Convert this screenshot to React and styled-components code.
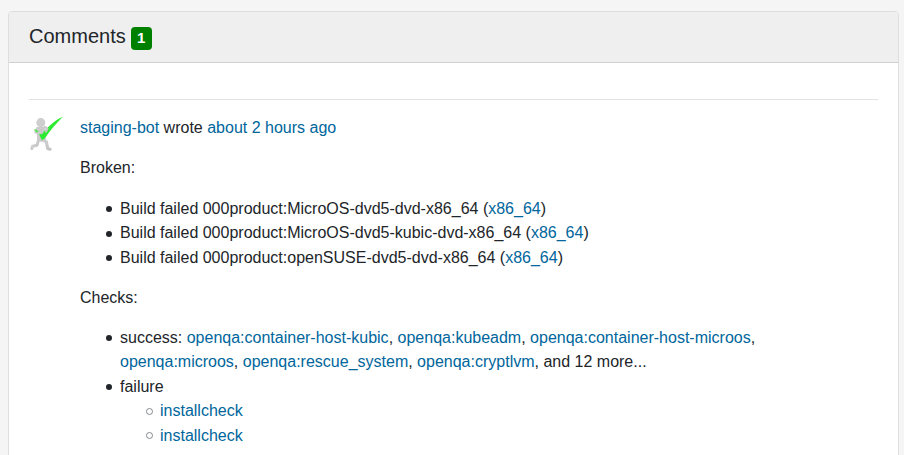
import React from "react";
import styled, { createGlobalStyle } from "styled-components";

const GlobalStyle = createGlobalStyle`
  *, *::before, *::after { box-sizing: border-box; }
  body {
    margin: 0;
    height: 455px;
    overflow: hidden;
    background: #f5f5f5;
    color: #212529;
    font: 16px/24.4px "Liberation Sans", Arial, sans-serif;
  }
`;

const Page = styled.main`
  height: 455px;
  padding: 11px 5px 0 8px;
  overflow: hidden;
`;

const Card = styled.section`
  height: 520px;
  background: #fff;
  border: 1px solid #dedede;
  border-radius: 4px;
  overflow: hidden;
`;

const CardHeader = styled.header`
  display: flex;
  align-items: center;
  gap: 5px;
  height: 51px;
  padding: 0 20px;
  background: #efefef;
  border-bottom: 1px solid #d0d0d0;
`;

const Title = styled.h5`
  margin: 0;
  font-size: 20px;
  font-weight: 400;
  line-height: 24px;
  padding-bottom: 2px;
`;

const Badge = styled.span`
  width: 21px;
  height: 23px;
  margin-top: 3px;
  border-radius: 4px;
  background: #008000;
  color: #fff;
  font-size: 15px;
  font-weight: 700;
  line-height: 21px;
  text-align: center;
`;

const CardBody = styled.div`
  padding: 36px 20px 0;
`;

const Divider = styled.hr`
  margin: 0 0 16px;
  border: 0;
  border-top: 1px solid #e2e2e2;
`;

const Comment = styled.article`
  display: flex;
  gap: 16px;
`;

const Avatar = styled.svg`
  flex: none;
  width: 35px;
  height: 35px;
`;

const Content = styled.div`
  flex: 1;
  min-width: 0;
`;

const Paragraph = styled.p`
  margin: 0 0 16px;
`;

const List = styled.ul`
  margin: 0 0 ${(p) => (p.$nested ? "0" : "15.4px")};
  padding-left: 40px;
  line-height: 24.45px;
  list-style: none;
`;

const Item = styled.li`
  &::before {
    content: "";
    display: inline-block;
    width: ${(p) => (p.$hollow ? "7px" : "6px")};
    height: ${(p) => (p.$hollow ? "7px" : "6px")};
    margin-left: -14px;
    margin-right: ${(p) => (p.$hollow ? "7px" : "8px")};
    border-radius: 50%;
    background: ${(p) => (p.$hollow ? "transparent" : "#212529")};
    border: ${(p) => (p.$hollow ? "1px solid #85888b" : "0")};
    vertical-align: ${(p) => (p.$hollow ? "1.6px" : "1.6px")};
  }
`;

const Checks = styled.div`
  width: 690px;
`;

const Link = styled.a`
  color: #00669c;
  text-decoration: none;
`;

const builds = ["MicroOS-dvd5-dvd-x86_64", "MicroOS-dvd5-kubic-dvd-x86_64", "openSUSE-dvd5-dvd-x86_64"];
const passed = [
  "container-host-kubic",
  "kubeadm",
  "container-host-microos",
  "microos",
  "rescue_system",
  "cryptlvm",
];

function BotAvatar() {
  return (
    <Avatar viewBox="0 0 35 35" aria-label="staging-bot">
      <defs>
        <linearGradient id="body" x1="0" y1="0" x2="1" y2="1">
          <stop offset="0" stopColor="#d6d6d6" />
          <stop offset="1" stopColor="#c2c2c2" />
        </linearGradient>
      </defs>
      <g fill="none" stroke="url(#body)" strokeLinecap="round" strokeLinejoin="round">
        <path d="M9.5 24 L8 29.2 L3.5 30.2 L2.8 32.6" strokeWidth="3" />
        <path d="M13 23.5 L17.4 26 L18.6 32.4 L21 33.2" strokeWidth="3.2" />
      </g>
      <path d="M8.5 10.8 Q12 9.6 15.6 11 L16.5 18 L16.8 24.4 Q12.5 27 8.2 25 L7.8 18 Z" fill="#cbcbcb" />
      <circle cx="11.8" cy="6.6" r="4.5" fill="#cecece" />
      <path d="M8.3 12.4 L6.5 16 L10.5 17.8" fill="none" stroke="#cccccc" strokeWidth="2.6" strokeLinecap="round" strokeLinejoin="round" />
      <path d="M4.6 13.4 L7.4 13.6 L9.6 15.8 L7.8 16.4 Z" fill="#4de650" />
      <path d="M10 18.2 L13.2 17.9 C18 11.8 25 4.7 34 .6 C28 6.8 21 14.5 15.8 22.4 L12.9 24.2 Z" fill="#2fea33" />
      <path d="M15.8 11 L18.4 12.6 L17 15.4" fill="none" stroke="#c8c8c8" strokeWidth="2.2" strokeLinecap="round" strokeLinejoin="round" />
    </Avatar>
  );
}

export default function App() {
  return (
    <>
      <GlobalStyle />
      <Page>
        <Card>
          <CardHeader>
            <Title>Comments</Title>
            <Badge>1</Badge>
          </CardHeader>
          <CardBody>
            <Divider />
            <Comment>
              <BotAvatar />
              <Content>
                <Paragraph>
                  <Link>staging-bot</Link> wrote <Link>about 2 hours ago</Link>
                </Paragraph>
                <Paragraph>Broken:</Paragraph>
                <List>
                  {builds.map((name) => (
                    <Item key={name}>
                      Build failed 000product:{name} (<Link>x86_64</Link>)
                    </Item>
                  ))}
                </List>
                <Paragraph>Checks:</Paragraph>
                <Checks>
                  <List>
                    <Item>
                      success:{" "}
                      {passed.map((name) => (
                        <React.Fragment key={name}>
                          <Link>openqa:{name}</Link>,{" "}
                        </React.Fragment>
                      ))}
                      and 12 more...
                    </Item>
                    <Item>
                      failure
                      <List $nested>
                        <Item $hollow><Link>installcheck</Link></Item>
                        <Item $hollow><Link>installcheck</Link></Item>
                      </List>
                    </Item>
                  </List>
                </Checks>
              </Content>
            </Comment>
          </CardBody>
        </Card>
      </Page>
    </>
  );
}
